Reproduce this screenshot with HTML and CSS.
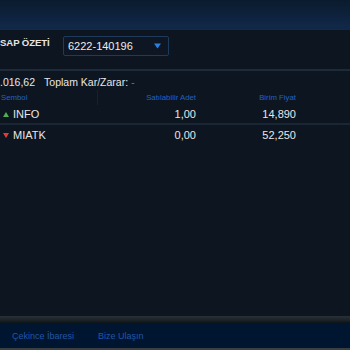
FILE: index.html
```html
<!DOCTYPE html>
<html lang="tr">
<head>
<meta charset="utf-8">
<link rel="stylesheet" href="styles.css">
</head>
<body>
<div class="page">
  <div class="topbar"></div>
  <div class="title-row">
    <div class="title">SAP ÖZETİ</div>
    <div class="select">
      <span class="select-text">6222-140196</span>
      <svg class="caret" width="7" height="6" viewBox="0 0 7 6"><path d="M0 0.5 L7 0.5 L3.5 5.5 Z" fill="#2a7fe0"/></svg>
    </div>
  </div>
  <div class="summary"><span class="total">.016,62</span><span class="pl">Toplam Kar/Zarar: <span class="neg">-</span></span></div>
  <div class="table">
    <div class="thead">
      <div class="c-sym">Sembol</div>
      <div class="c-qty">Satılabilir Adet</div>
      <div class="c-price">Birim Fiyat</div>
    </div>
    <div class="row">
      <div class="c-sym"><span class="tri up"></span>INFO</div>
      <div class="c-qty">1,00</div>
      <div class="c-price">14,890</div>
    </div>
    <div class="row last">
      <div class="c-sym"><span class="tri down"></span>MIATK</div>
      <div class="c-qty">0,00</div>
      <div class="c-price">52,250</div>
    </div>
  </div>
  <div class="spacer"></div>
  <div class="footer">
    <div class="band"></div>
    <div class="links">
      <span class="link">Çekince İbaresi</span>
      <span class="link">Bize Ulaşın</span>
    </div>
    <div class="bottom-line"></div>
  </div>
</div>
</body>
</html>
```
FILE: styles.css
```css
html, body {
  margin: 0;
  padding: 0;
  background: #0d1520;
  overflow: hidden;
}
.page {
  width: 350px;
  height: 350px;
  display: flex;
  flex-direction: column;
  font-family: "Liberation Sans", Arial, sans-serif;
  color: #e8e8e8;
  overflow: hidden;
}
.topbar {
  height: 30px;
  flex: none;
  background: linear-gradient(#0b1b2e, #11294a);
}
.title-row {
  height: 39px;
  flex: none;
  display: flex;
  align-items: flex-start;
  border-bottom: 2px solid #1c2a39;
}
.title {
  margin-top: 7px;
  font-size: 9.6px;
  font-weight: bold;
  letter-spacing: -0.1px;
  color: #e6e6e6;
  width: 63px;
  flex: none;
  white-space: nowrap;
}
.select {
  margin-top: 6px;
  height: 18px;
  border: 1px solid #1f3b5c;
  border-radius: 2px;
  display: flex;
  align-items: center;
  justify-content: space-between;
  padding: 0 7px 0 4px;
  width: 93px;
  background: #0d1622;
}
.select-text {
  font-size: 11px;
  color: #ececec;
}
.summary {
  height: 17px;
  flex: none;
  display: flex;
  align-items: center;
  font-size: 10.5px;
  padding-top: 2px;
}
.total {
  margin-right: 9px;
}
.neg { color: #d24a4a; }
.table {
  flex: none;
  font-size: 11px;
}
.thead {
  display: flex;
  height: 15px;
  align-items: center;
  font-size: 7.8px;
  color: #2163c0;
}
.thead .c-sym {
  border-right: 1px solid #18222e;
  height: 15px;
  line-height: 15px;
}
.c-sym {
  width: 98px;
  padding-left: 1px;
  box-sizing: border-box;
  display: flex;
  align-items: center;
}
.c-qty {
  width: 98px;
  text-align: right;
}
.c-price {
  width: 100px;
  text-align: right;
}
.row {
  display: flex;
  align-items: center;
  height: 18px;
  border-bottom: 2px solid #1a2633;
}
.row.last {
  border-bottom: none;
  height: 20px;
}
.tri {
  width: 0;
  height: 0;
  margin: 0 4px 0 2px;
  border-left: 3.5px solid transparent;
  border-right: 3.5px solid transparent;
}
.tri.up { border-bottom: 5px solid #4caf50; }
.tri.down { border-top: 5px solid #e03c3c; }
.spacer { flex: 1; }
.footer {
  flex: none;
  display: flex;
  flex-direction: column;
}
.band {
  height: 7px;
  background: linear-gradient(#2a3136, #1b2327 60%, #0c1418);
}
.links {
  height: 25px;
  background: #001530;
  display: flex;
  align-items: center;
  padding-left: 12px;
  gap: 24px;
  font-size: 9px;
  color: #2157a6;
}
.bottom-line {
  height: 2px;
  background: #3a3f44;
}
```
